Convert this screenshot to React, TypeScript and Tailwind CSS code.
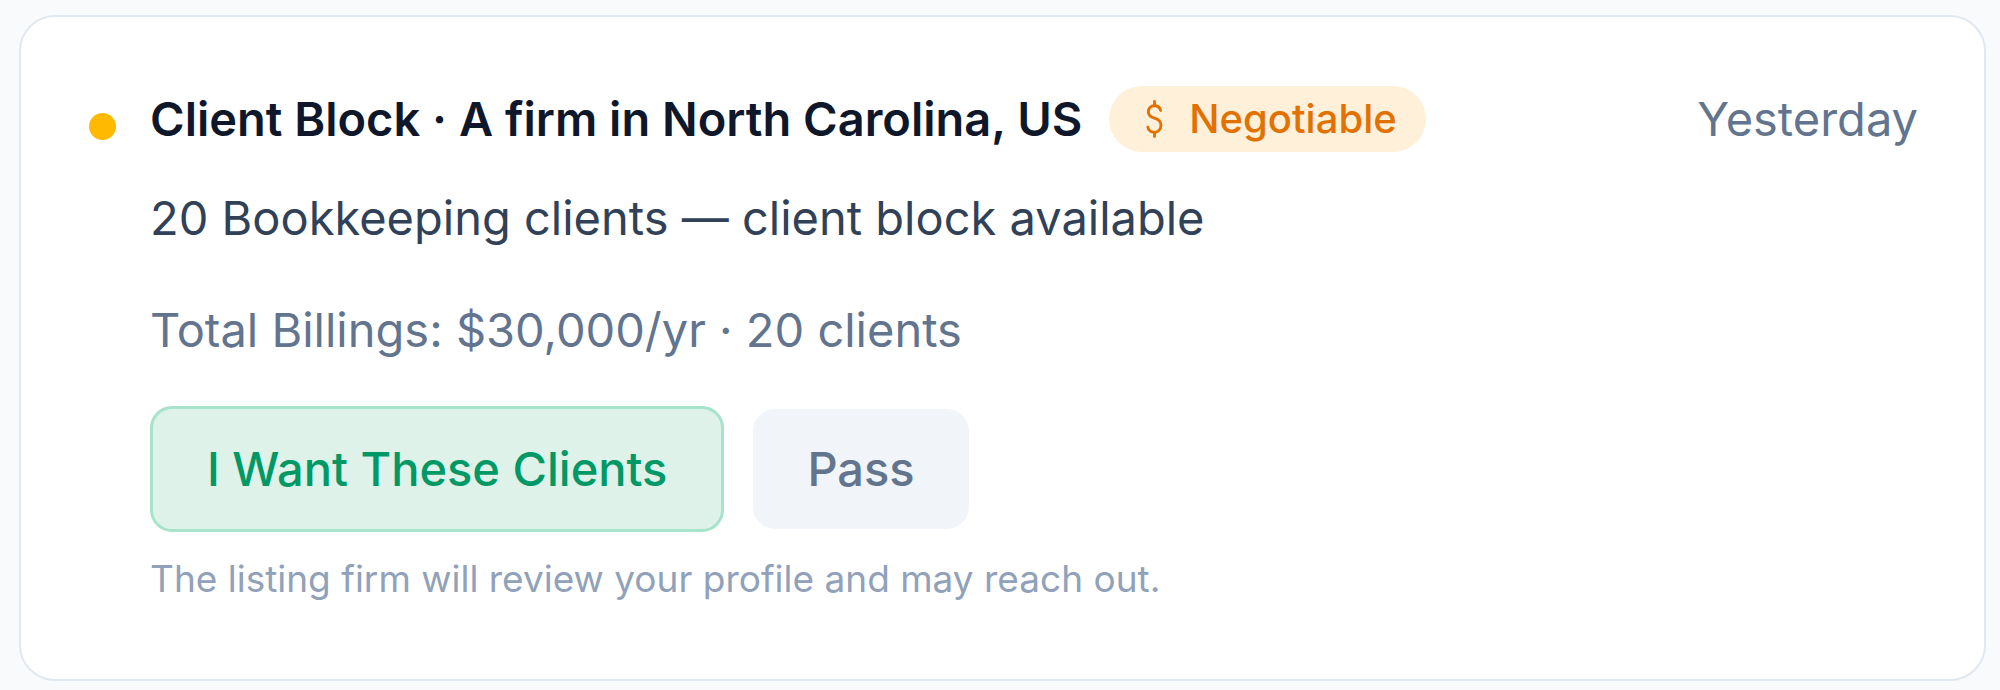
import { useState } from "react";

function DollarIcon() {
  return (
    <svg width="25" height="38" viewBox="0 0 24 40" fill="none" stroke="currentColor" strokeWidth="3" strokeLinecap="round" strokeLinejoin="round">
      <path d="M12 1.5V6" />
      <path d="M12 34v4.5" />
      <path d="M18.5 11C17.8 8 15.2 6 12 6C8.3 6 5.5 8.3 5.5 12.5C5.5 16.5 8.8 18 12 19C15.5 20 18.8 21.5 18.8 26.5C18.8 31 15.7 34 12 34C8.3 34 5.6 31.8 5 28.5" />
    </svg>
  );
}

export default function App() {
  const [choice, setChoice] = useState<"want" | "pass" | null>(null);

  return (
    <div className="min-h-screen bg-slate-50 pl-[19px] pr-[14px] pt-[15px] pb-[13px] font-['Inter',sans-serif]">
      <div className="rounded-[36px] border-2 border-slate-200 bg-white pl-[68px] pr-[66px] pt-[69px] pb-[78px]">
        <div className="flex h-[66px] items-center">
          <span className="mt-[15px] h-[27px] w-[27px] shrink-0 rounded-full bg-amber-400" />
          <h2 className="ml-[34px] text-[47px] font-semibold leading-[56px] text-slate-900">
            Client Block · A firm in North Carolina, US
          </h2>
          <span className="ml-[27px] flex h-[66px] items-center gap-[22px] rounded-full bg-amber-500/15 pl-[33px] pr-[29px] text-[40px] font-medium text-amber-600">
            <DollarIcon />
            Negotiable
          </span>
          <span className="ml-auto text-[47px] leading-[56px] text-slate-500">Yesterday</span>
        </div>

        <div className="ml-[61px]">
          <p className="mt-[38px] text-[47px] leading-[56px] text-slate-700">
            20 Bookkeeping clients — client block available
          </p>
          <p className="mt-[56px] text-[47px] leading-[56px] text-slate-500">
            Total Billings: $30,000/yr · 20 clients
          </p>

          <div className="mt-[48px] flex items-center gap-[29px]">
            <button
              onClick={() => setChoice("want")}
              className="h-[126px] rounded-[22px] border-[3px] border-[#a6e3cb] bg-[#dff2e9] px-[54px] text-[47px] font-medium text-emerald-600"
            >
              I Want These Clients
            </button>
            <button
              onClick={() => setChoice("pass")}
              className="h-[120px] rounded-[22px] bg-slate-100 px-[54px] text-[47px] font-medium text-slate-500"
            >
              Pass
            </button>
          </div>

          <p className="mt-[25px] text-[37px] leading-[44px] text-slate-400">
            {choice === "pass"
              ? "You passed on this listing."
              : "The listing firm will review your profile and may reach out."}
          </p>
        </div>
      </div>
    </div>
  );
}
